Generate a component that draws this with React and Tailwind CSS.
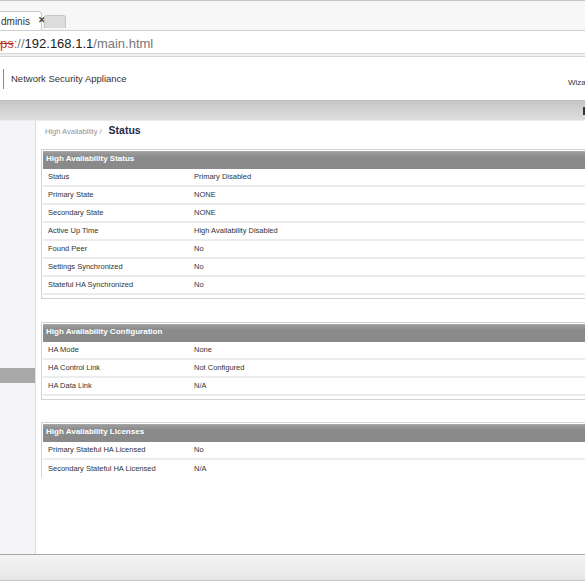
const statusRows = [
  ['Status', 'Primary Disabled'],
  ['Primary State', 'NONE'],
  ['Secondary State', 'NONE'],
  ['Active Up Time', 'High Availability Disabled'],
  ['Found Peer', 'No'],
  ['Settings Synchronized', 'No'],
  ['Stateful HA Synchronized', 'No'],
];

const configRows = [
  ['HA Mode', 'None'],
  ['HA Control Link', 'Not Configured'],
  ['HA Data Link', 'N/A'],
];

const licenseRows = [
  ['Primary Stateful HA Licensed', 'No'],
  ['Secondary Stateful HA Licensed', 'N/A'],
];

function Section({ title, rows, closed = true }) {
  return (
    <div
      className={
        'ml-[5px] border-l border-t border-[#d2d2d2] pl-px pt-px ' +
        (closed ? 'border-b pb-[3px]' : '')
      }
    >
      <div className="flex h-[18px] items-center border-t border-[#a6a6a6] bg-[linear-gradient(#9c9c9c,#8a8a8a_30%,#8a8a8a)] pb-[3px] pl-[3px] text-[8px] font-bold text-white">
        {title}
      </div>
      {rows.map(([label, value], i) => (
        <div
          key={label}
          className={
            'flex h-[18px] items-center text-[7.5px] text-[#333] ' +
            (i < rows.length - 1 || closed ? 'border-b-2 border-[#ececec]' : '')
          }
        >
          <span className="w-[151px] pl-[5px]">{label}</span>
          <span>{value}</span>
        </div>
      ))}
    </div>
  );
}

export default function App() {
  return (
    <div
      className="relative h-[585px] w-[585px] overflow-hidden bg-white"
      style={{ fontFamily: '"Liberation Sans", Arial, sans-serif' }}
    >
      {/* browser tabs */}
      <div className="relative h-[30px] border-t border-[#c4c4c4] bg-[#f7f7f7]">
        <div className="absolute bottom-0 left-[-8px] flex h-[19px] w-[50px] items-center rounded-t-[4px] border border-b-0 border-[#c8c8c8] bg-white pl-[8px]">
          <span className="text-[10px] text-[#333]">dminis</span>
          <span className="ml-[8px] text-[9px] font-bold text-[#444]">✕</span>
        </div>
        <div className="absolute bottom-[2px] left-[44px] h-[13px] w-[22px] rounded-t-[3px] border border-b-0 border-[#c4c4c4] bg-[#dcdcdc]" />
      </div>
      {/* address bar */}
      <div className="flex h-[23px] items-center border-t border-[#cfcfcf] bg-white pt-[4px] text-[13px]">
        <span className="text-[#c0392b] line-through decoration-[#b03020]">ps</span>
        <span className="text-[#777]">://</span>
        <span className="text-[#222]">192.168.1.1</span>
        <span className="text-[#777]">/main.html</span>
      </div>
      <div className="h-[4px] border-y border-[#d6d6d6] bg-[#efefef]" />
      {/* product header */}
      <div className="relative flex h-[44px] items-center border-b border-[#bdbdbd] bg-white">
        <div className="ml-[3px] h-[20px] w-px bg-[#8a8a8a]" />
        <span className="ml-[7px] pt-[2px] text-[9.5px] text-[#333]">Network Security Appliance</span>
        <span className="absolute left-[568px] top-[20px] text-[8px] text-[#333]">Wizards</span>
      </div>
      <div className="relative h-[19px] bg-[linear-gradient(#c6c6c6,#dedede)]">
        <div className="absolute right-0 top-[6px] h-[8px] w-[2px] bg-[#333]" />
      </div>
      <div className="h-px bg-[#ebebeb]" />
      {/* body */}
      <div className="flex h-[433px]">
        <div className="w-[36px] shrink-0 border-r border-[#dcdcdc] bg-[#f5f5f7] pt-[247px]">
          <div className="h-[15px] bg-[#a8a8a8]" />
        </div>
        <div className="w-[700px] shrink-0">
          <div className="flex h-[20px] items-center pl-[9px]">
            <span className="pt-[1px] text-[7.5px] text-[#8c92a4]">High Availability /</span>
            <span className="ml-[7px] text-[10.5px] font-bold text-[#1f2846]">Status</span>
          </div>
          <div className="mt-[8px]">
            <Section title="High Availability Status" rows={statusRows} />
          </div>
          <div className="mt-[23px]">
            <Section title="High Availability Configuration" rows={configRows} />
          </div>
          <div className="mt-[22px]">
            <Section title="High Availability Licenses" rows={licenseRows} closed={false} />
          </div>
        </div>
      </div>
      {/* footer */}
      <div className="h-[26px] border-t border-[#a8a8a8] bg-[linear-gradient(#f4f4f4,#e6e6e8)]" />
      <div className="h-px bg-[#c4c4c4]" />
      <div className="h-[5px] bg-white" />
    </div>
  );
}
